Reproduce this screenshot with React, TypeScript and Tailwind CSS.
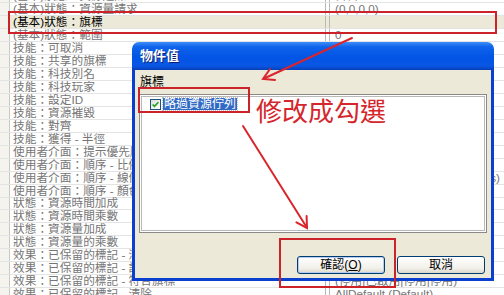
import React from "react"

const rows: [string, string][] = [
  ["(基本)狀態：資源邊際", "日日A"],
  ["(基本)狀態：資源量請求", "(0,0,0,0)"],
  ["(基本)狀態：旗標", ""],
  ["(基本)狀態：範圍", "0"],
  ["技能：可取消", ""],
  ["技能：共享的旗標", ""],
  ["技能：科技別名", ""],
  ["技能：科技玩家", ""],
  ["技能：設定ID", ""],
  ["技能：資源摧毀", ""],
  ["技能：對齊", ""],
  ["技能：獲得 - 半徑", ""],
  ["使用者介面：提示優先順序", ""],
  ["使用者介面：順序 - 比例", ""],
  ["使用者介面：順序 - 線條", "(Line Colors)"],
  ["使用者介面：順序 - 顏色", ""],
  ["狀態：資源時間加成", ""],
  ["狀態：資源時間乘數", ""],
  ["狀態：資源量加成", ""],
  ["狀態：資源量的乘數", ""],
  ["效果：已保留的標記 - 清除", ""],
  ["效果：已保留的標記 - 設定", ""],
  ["效果：已保留的標記 - 符合旗標", "(停用|已啟用|停用|停用)"],
  ["效果：已保留的標記 - 清除", "AllDefault (Default)"],
]

const PropertyGrid = () => {
  return (
    <div className="-mt-[9.5px] flex flex-col">
      {rows.map(([name, value], i) => (
        <div
          key={i}
          className={`flex h-[12.95px] shrink-0 items-center border-b border-[#e4e4e4] ${i === 2 ? "bg-[#ece9d8] text-black" : "text-[#767676]"}`}
        >
          <div className="h-full w-[10px] shrink-0 border-r border-[#c8c8c8] bg-[#f4f3ee]" />
          <div className="w-[315px] shrink-0 overflow-hidden whitespace-nowrap pl-[3px] text-[11.7px] leading-[12px]">{name}</div>
          <div className="h-full w-[5px] shrink-0 border-x border-[#b8b8b8]" />
          <div className={`flex-1 overflow-hidden whitespace-nowrap text-[11.7px] leading-[12px] ${i === 14 ? "pr-[4px] text-right" : "pl-[5px]"}`}>{value}</div>
        </div>
      ))}
    </div>
  )
}

const CheckMark = () => (
  <svg viewBox="0 0 11 11" className="h-[9px] w-[9px]">
    <path d="M2 5.5 L4.3 7.8 L9 2.8" fill="none" stroke="#21a121" strokeWidth="2" />
  </svg>
)

const Dialog = () => {
  return (
    <div className="absolute left-[132px] top-[42px] flex h-[239px] w-[362px] flex-col">
      <div className="flex h-[28px] shrink-0 items-center rounded-t-[7px] bg-[linear-gradient(180deg,#3c8ef9_0%,#0f62ea_18%,#0255e5_55%,#0a56e4_85%,#0640b8_100%)] pl-[8px]">
        <span className="text-[13px] font-bold text-white [text-shadow:1px_1px_0_#0a1e6e]">物件值</span>
      </div>
      <div className="flex flex-1 flex-col border-x-[3px] border-b-[3px] border-[#0a3fd0] bg-[#ece9d8] px-[4px] pt-[5px]">
        <div className="pl-[1px] text-[12px] leading-[14px] text-black">
          <span className="underline underline-offset-2">旗標</span>
        </div>
        <div className="mt-[5px] h-[139px] shrink-0 border border-[#8a8a8a] bg-white pl-[10px] pt-[3px] shadow-[inset_0_0_0_1px_#fff,inset_0_0_0_2px_#b8b8b8]">
          <div className="flex items-center gap-[2px]">
            <div className="flex h-[11px] w-[11px] items-center justify-center border border-[#1c5180] bg-[linear-gradient(135deg,#dcdcd7,#ffffff)]">
              <CheckMark />
            </div>
            <span className="bg-[#316ac5] px-[1px] text-[12px] leading-[12px] text-white outline-1 outline-dotted outline-[#c0c0c0]">略過資源佇列</span>
          </div>
        </div>
        <div className="mt-[23px] flex justify-end gap-[12px] pr-[2px]">
          <button className="flex h-[18px] w-[88px] items-center justify-center rounded-[3px] border border-[#003c74] bg-[linear-gradient(180deg,#ffffff,#f1f0ea_70%,#dcd8cc)] text-[12px] leading-none text-black shadow-[inset_0_0_0_1px_#b5cdf3]">
            確認(<span className="underline">O</span>)
          </button>
          <button className="flex h-[18px] w-[88px] items-center justify-center rounded-[3px] border border-[#003c74] bg-[linear-gradient(180deg,#ffffff,#f1f0ea_70%,#dcd8cc)] text-[12px] leading-none text-black">
            取消
          </button>
        </div>
      </div>
    </div>
  )
}

const Arrows = () => (
  <svg className="pointer-events-none absolute inset-0 h-full w-full" viewBox="0 0 504 295">
    <g stroke="#d9262c" strokeWidth="2" fill="none" strokeLinecap="round">
      <line x1="352" y1="38" x2="264" y2="78.5" />
      <polyline points="275,80 263,79 270,69" />
      <line x1="243" y1="126" x2="306.5" y2="227" />
      <polyline points="306.6,216 307,228 296.4,222.4" />
    </g>
  </svg>
)

export default function App() {
  return (
    <div className="relative h-[295px] w-[504px] overflow-hidden bg-white font-['Liberation_Sans','Noto_Sans_CJK_TC',sans-serif]">
      <PropertyGrid />
      <div className="absolute left-[8px] top-[11px] h-[23px] w-[489px] border-2 border-[#cc2229]" />
      <Dialog />
      <div className="absolute left-[138px] top-[87px] h-[26px] w-[112px] border-2 border-[#cc2229]" />
      <div className="absolute left-[256px] top-[97px] text-[26px] leading-[30px] text-[#d4262c]">修改成勾選</div>
      <div className="absolute left-[279px] top-[238px] h-[50px] w-[117px] border-2 border-[#cc2229]" />
      <Arrows />
    </div>
  )
}
